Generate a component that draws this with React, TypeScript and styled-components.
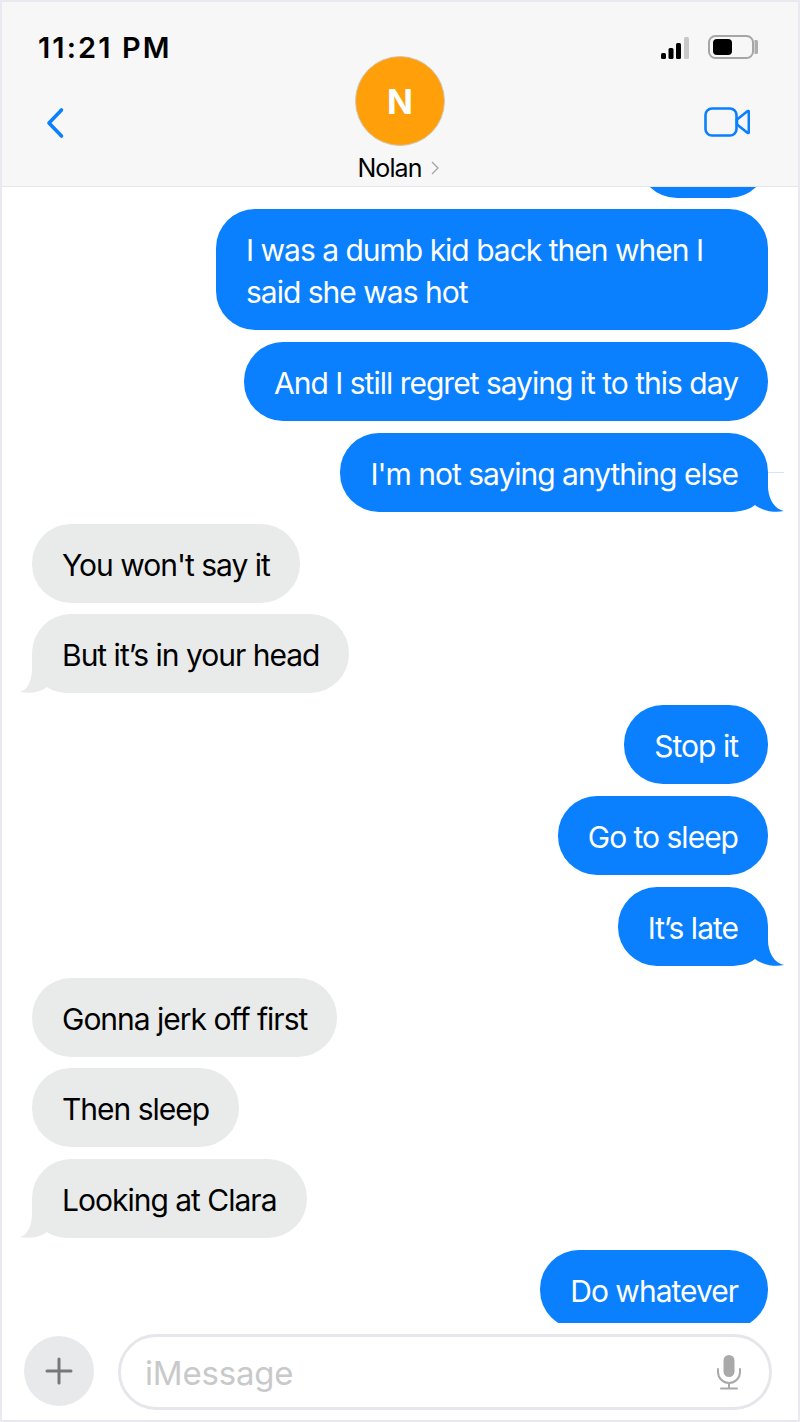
import React from "react";
import styled, { createGlobalStyle } from "styled-components";

const Global = createGlobalStyle`
  html, body { margin: 0; padding: 0; background: #ffffff; }
  #root { width: 800px; height: 1422px; }
  * { box-sizing: border-box; }
`;

const Phone = styled.div`
  width: 800px;
  height: 1422px;
  display: flex;
  flex-direction: column;
  border: 2px solid #e9e9ef;
  background: #ffffff;
  font-family: Inter, "Liberation Sans", sans-serif;
  overflow: hidden;
`;

const Header = styled.header`
  flex: 0 0 185px;
  display: flex;
  flex-direction: column;
  background: #f7f7f7;
  border-bottom: 1px solid #e6e6ea;
`;

const StatusBar = styled.div`
  height: 54px;
  display: flex;
  align-items: flex-start;
  justify-content: space-between;
  padding: 29px 40px 0 36px;
`;

const Clock = styled.div`
  font-size: 29px;
  line-height: 34px;
  font-weight: 600;
  color: #000;
  letter-spacing: 2.1px;
`;

const StatusIcons = styled.div`
  display: flex;
  align-items: flex-end;
  gap: 18px;
  margin-top: 4px;
`;

const NavBar = styled.div`
  position: relative;
  flex: 1;
  display: flex;
  justify-content: space-between;
  padding: 51px 48px 0 42px;
`;

const Contact = styled.div`
  position: absolute;
  left: 0;
  right: 0;
  top: 0;
  display: flex;
  flex-direction: column;
  align-items: center;
`;

const Avatar = styled.div`
  width: 90px;
  height: 90px;
  border-radius: 50%;
  background: #ff9f0a;
  border: 1px solid #cfc8bc;
  color: #fff;
  font-size: 34px;
  font-weight: 700;
  display: flex;
  align-items: center;
  justify-content: center;
`;

const NameRow = styled.div`
  display: flex;
  align-items: center;
  gap: 9px;
  margin: 7px 4px 0 0;
  font-size: 25px;
  line-height: 30px;
  letter-spacing: -0.9px;
  color: #000;
`;

const Messages = styled.main`
  flex: 1;
  display: flex;
  flex-direction: column;
  gap: 11.8px;
  padding: 0 30px;
  overflow: hidden;
  min-height: 0;
`;

const Bubble = styled.div<{ $me?: boolean }>`
  position: relative;
  flex: none;
  align-self: ${(p) => (p.$me ? "flex-end" : "flex-start")};
  max-width: 552px;
  background: ${(p) => (p.$me ? "#0a80ff" : "#e9ebeb")};
  color: ${(p) => (p.$me ? "#ffffff" : "#000000")};
  font-size: 30px;
  line-height: 42px;
  letter-spacing: -1px;
  padding: 20px 30px 17px;
  border-radius: 39px;
`;

const BubbleText = styled.span`
  position: relative;
  z-index: 1;
`;

const ClippedBubble = styled.div`
  flex: none;
  align-self: flex-end;
  width: 130px;
  height: 79px;
  margin-top: -68px;
  margin-bottom: -0.6px;
  background: #0a80ff;
  border-radius: 39px;
`;

const Tail = styled.svg<{ $me?: boolean }>`
  position: absolute;
  bottom: 0;
  ${(p) => (p.$me ? "right: -16px;" : "left: -12px;")}
  display: block;
`;

const Streak = styled.span`
  position: absolute;
  right: -16px;
  top: 39px;
  width: 16px;
  height: 1px;
  background: #cfe6ff;
`;

const Composer = styled.footer`
  flex: 0 0 97px;
  display: flex;
  align-items: flex-start;
  gap: 24px;
  padding: 11px 26px 0 22px;
  background: #ffffff;
`;

const PlusButton = styled.div`
  width: 70px;
  height: 70px;
  margin-top: 2px;
  border-radius: 50%;
  background: #e8e9ea;
  display: flex;
  align-items: center;
  justify-content: center;
  flex: none;
`;

const InputBox = styled.div`
  flex: 1;
  height: 76px;
  border: 3px solid #e6e7ea;
  border-radius: 38px;
  display: flex;
  align-items: center;
  justify-content: space-between;
  padding: 0 27px 0 24px;
`;

const Placeholder = styled.span`
  font-size: 33px;
  letter-spacing: -0.2px;
  color: #c8c9ca;
  position: relative;
  top: 1px;
`;

type Msg = { text: string; me?: boolean; tail?: boolean; streak?: boolean };

const msgs: Msg[] = [
  { text: "I was a dumb kid back then when I said she was hot", me: true },
  { text: "And I still regret saying it to this day", me: true },
  { text: "I'm not saying anything else", me: true, tail: true, streak: true },
  { text: "You won't say it" },
  { text: "But it’s in your head", tail: true },
  { text: "Stop it", me: true },
  { text: "Go to sleep", me: true },
  { text: "It’s late", me: true, tail: true },
  { text: "Gonna jerk off first" },
  { text: "Then sleep" },
  { text: "Looking at Clara", tail: true },
  { text: "Do whatever", me: true },
];

const MeTail = () => (
  <Tail $me width="56" height="40" viewBox="0 0 56 40">
    <path d="M40 0V14C40 26 46 37 56 39C47 41 35 39 27 33C21 38 12 40 0 40V0Z" fill="#0a80ff" />
  </Tail>
);

const ThemTail = () => (
  <Tail width="52" height="40" viewBox="0 0 52 40">
    <path d="M12 0V16C12 26 8 37 0 39C10 41 21 39 27 34C33 38 40 40 52 40V0Z" fill="#e9ebeb" />
  </Tail>
);

export default function App() {
  return (
    <Phone>
      <Global />
      <Header>
        <StatusBar>
          <Clock>11:21 PM</Clock>
          <StatusIcons>
            <svg width="29" height="23" viewBox="0 0 29 23">
              <rect x="0" y="16" width="5" height="6" rx="1.5" fill="#000" />
              <rect x="7.5" y="11" width="5" height="11" rx="1.5" fill="#000" />
              <rect x="15" y="6" width="5" height="16" rx="1.5" fill="#000" />
              <rect x="23" y="0" width="5" height="22" rx="1.5" fill="#c8c8c8" />
            </svg>
            <svg width="50" height="25" viewBox="0 0 50 25">
              <rect x="1" y="1" width="44" height="22" rx="6.5" fill="none" stroke="#a6a6a6" strokeWidth="2" />
              <rect x="5" y="4" width="19" height="16" rx="4" fill="#000" />
              <path d="M46.5 5H48.5A1.5 1.5 0 0 1 50 6.5V17.5A1.5 1.5 0 0 1 48.5 19H46.5Z" fill="#adadad" />
            </svg>
          </StatusIcons>
        </StatusBar>
        <NavBar>
          <Contact>
            <Avatar>N</Avatar>
            <NameRow>
              Nolan
              <svg width="8" height="14" viewBox="0 0 8 14">
                <path d="M1 1L7 7L1 13" fill="none" stroke="#a3a3a3" strokeWidth="1.3" />
              </svg>
            </NameRow>
          </Contact>
          <svg width="22" height="32" viewBox="0 0 22 32">
            <path d="M17.5 3L5 16L17.5 29" fill="none" stroke="#0a80ff" strokeWidth="3.6" strokeLinecap="round" strokeLinejoin="round" />
          </svg>
          <svg width="46" height="30" viewBox="0 0 46 30">
            <rect x="1.5" y="1.5" width="31" height="27" rx="6.5" fill="none" stroke="#0a80ff" strokeWidth="2.6" />
            <path d="M33 12.5L43.4 4.2C44 3.7 44.8 4 44.8 4.8V25.2C44.8 26 44 26.3 43.4 25.8L33 17.5Z" fill="none" stroke="#0a80ff" strokeWidth="2.6" strokeLinejoin="round" />
          </svg>
        </NavBar>
      </Header>
      <Messages>
        <ClippedBubble />
        {msgs.map((m, i) => (
          <Bubble key={i} $me={m.me}>
            <BubbleText>{m.text}</BubbleText>
            {m.tail && (m.me ? <MeTail /> : <ThemTail />)}
            {m.streak && <Streak />}
          </Bubble>
        ))}
      </Messages>
      <Composer>
        <PlusButton>
          <svg width="28" height="28" viewBox="0 0 28 28">
            <path d="M14 2V26M2 14H26" stroke="#787878" strokeWidth="3" strokeLinecap="round" />
          </svg>
        </PlusButton>
        <InputBox>
          <Placeholder>iMessage</Placeholder>
          <svg width="26" height="36" viewBox="0 0 26 36">
            <rect x="7.5" y="1" width="11" height="22" rx="5.5" fill="#a9a9a9" />
            <path d="M2 15V18A11 11 0 0 0 24 18V15M13 29V34M5 34.5H21" fill="none" stroke="#a9a9a9" strokeWidth="2" strokeLinecap="round" />
          </svg>
        </InputBox>
      </Composer>
    </Phone>
  );
}
